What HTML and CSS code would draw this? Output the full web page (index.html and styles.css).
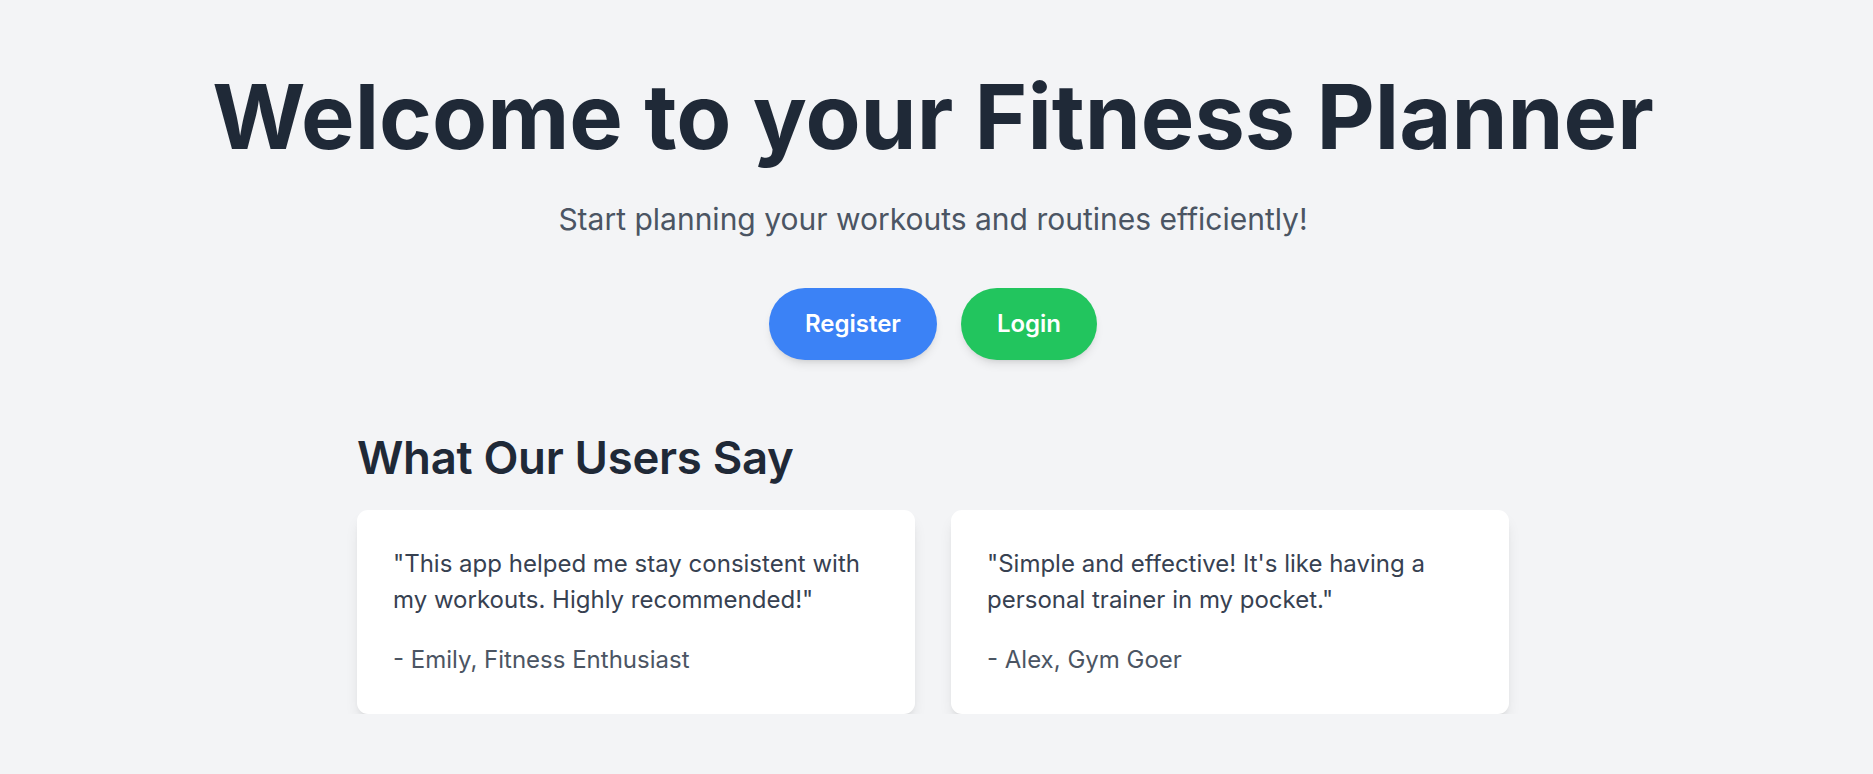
FILE: index.html
```html
<!DOCTYPE html>
<html lang="en">
<head>
<meta charset="utf-8">
<title>Fitness Planner</title>
<link rel="stylesheet" href="styles.css">
</head>
<body>
<main class="page">
  <section class="hero">
    <h1 class="hero-title">Welcome to your Fitness Planner</h1>
    <p class="hero-subtitle">Start planning your workouts and routines efficiently!</p>
    <div class="hero-actions">
      <a class="btn btn-blue" href="#">Register</a>
      <a class="btn btn-green" href="#">Login</a>
    </div>
  </section>
  <section class="testimonials">
    <h2 class="section-title">What Our Users Say</h2>
    <div class="cards">
      <div class="card">
        <p class="quote">"This app helped me stay consistent with my workouts. Highly recommended!"</p>
        <p class="author">- Emily, Fitness Enthusiast</p>
      </div>
      <div class="card">
        <p class="quote">"Simple and effective! It's like having a personal trainer in my pocket."</p>
        <p class="author">- Alex, Gym Goer</p>
      </div>
    </div>
  </section>
</main>
</body>
</html>
```
FILE: styles.css
```css
* { box-sizing: border-box; }
html, body { margin: 0; padding: 0; }
body {
  background: #f3f4f6;
  font-family: Inter, "Noto Sans", "Liberation Sans", sans-serif;
  color: #1f2937;
  padding-right: 7px;
}
.page {
  display: flex;
  flex-direction: column;
  align-items: center;
  padding-top: 72px;
}
.hero {
  display: flex;
  flex-direction: column;
  align-items: center;
}
.hero-title {
  margin: 0;
  font-size: 90px;
  line-height: 90px;
  font-weight: 700;
  color: #1f2937;
}
.hero-subtitle {
  margin: 39px 0 0;
  font-size: 30px;
  line-height: 36px;
  color: #4b5563;
}
.hero-actions {
  display: flex;
  gap: 24px;
  margin-top: 51px;
}
.btn {
  display: block;
  padding: 20px 36px;
  font-size: 24px;
  line-height: 32px;
  font-weight: 600;
  color: #ffffff;
  text-decoration: none;
  border-radius: 9999px;
  box-shadow: 0 6px 10px -2px rgba(0,0,0,0.1), 0 3px 5px -3px rgba(0,0,0,0.1);
}
.btn-blue { background: #3b82f6; }
.btn-green { background: #22c55e; }
.testimonials {
  width: 1152px;
  margin-top: 74px;
}
.section-title {
  margin: 0;
  font-size: 45.5px;
  line-height: 48px;
  font-weight: 600;
  letter-spacing: -0.3px;
  color: #1f2937;
}
.cards {
  display: grid;
  grid-template-columns: 1fr 1fr;
  gap: 36px;
  margin-top: 28px;
}
.card {
  background: #ffffff;
  border-radius: 11px;
  padding: 36px;
  box-shadow: 0 10px 15px -3px rgba(0,0,0,0.1), 0 4px 6px -4px rgba(0,0,0,0.1);
}
.quote {
  margin: 0;
  font-size: 24px;
  line-height: 36px;
  color: #374151;
}
.author {
  margin: 24px 0 0;
  font-size: 24px;
  line-height: 36px;
  color: #4b5563;
}
```
